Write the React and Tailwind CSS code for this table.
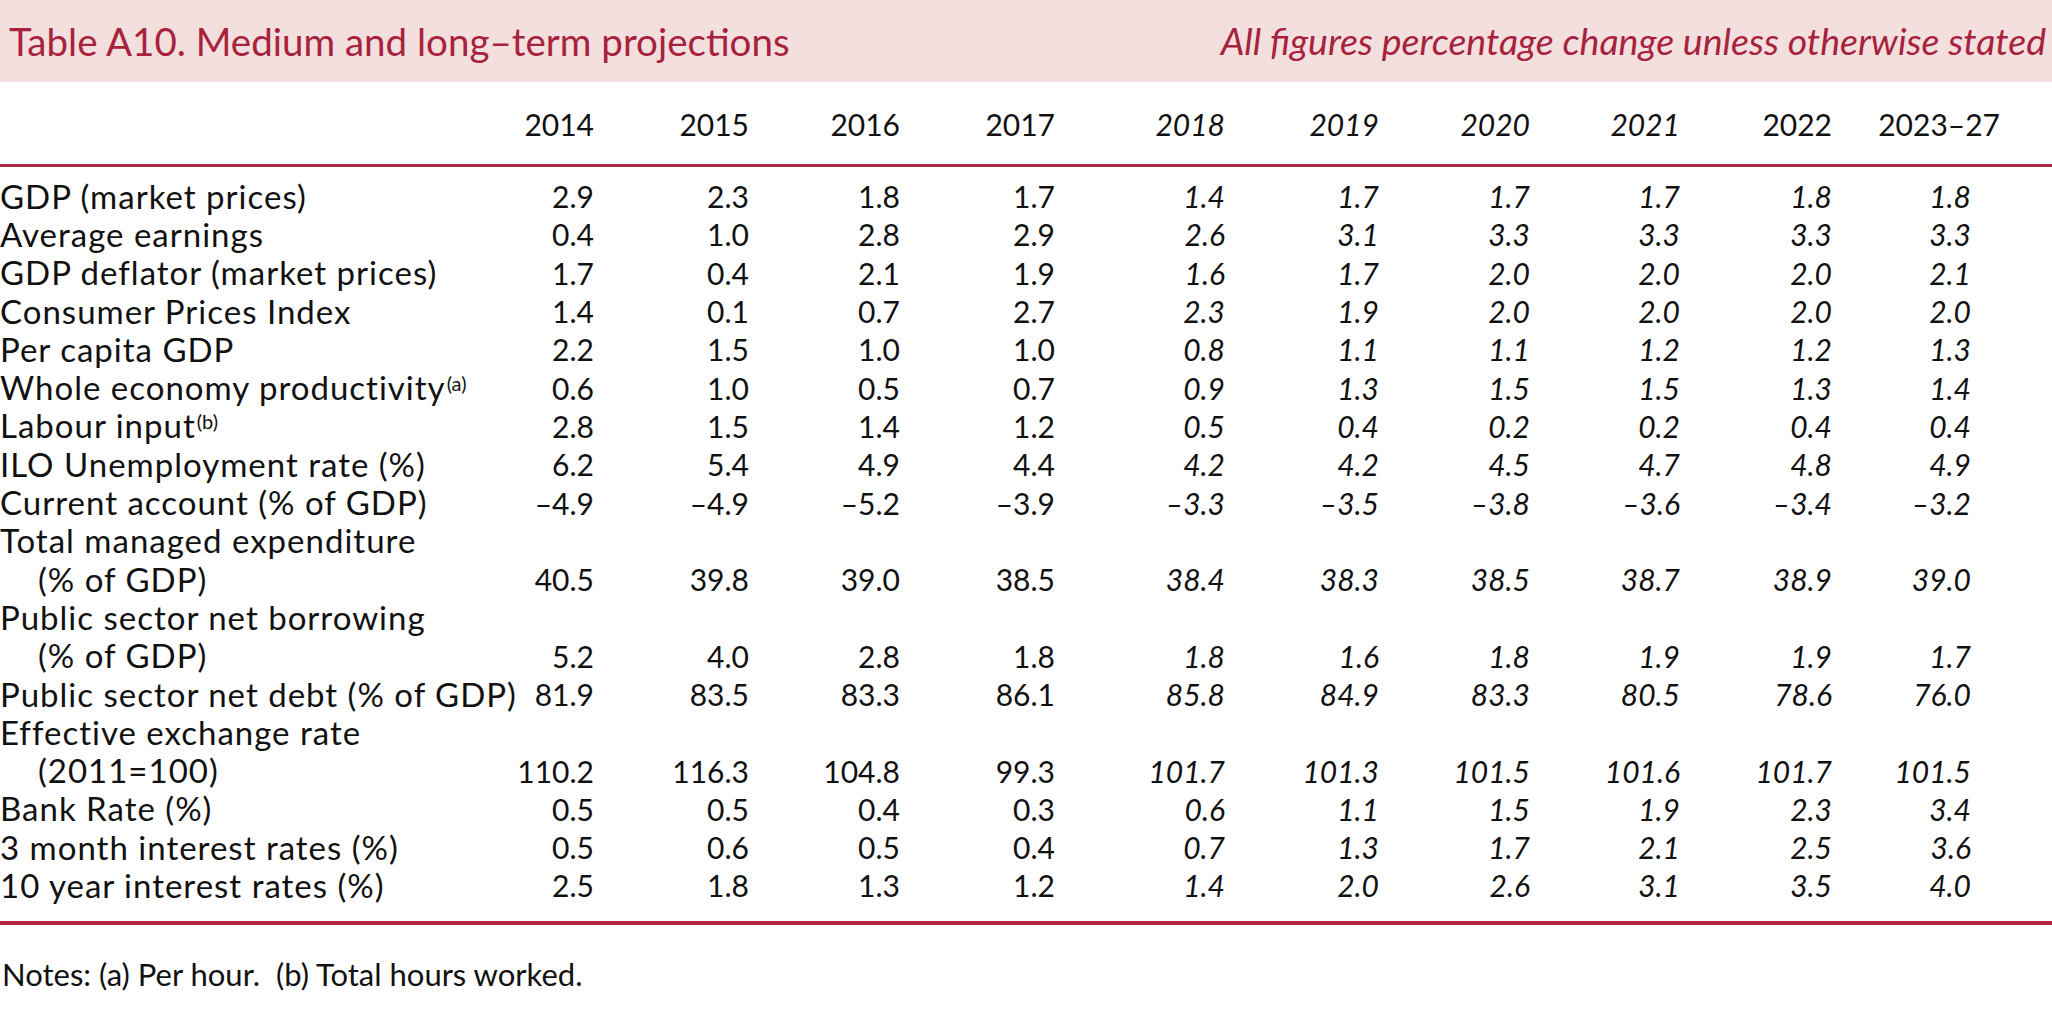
import React from "react";

const years = [
  { y: "2014", it: false },
  { y: "2015", it: false },
  { y: "2016", it: false },
  { y: "2017", it: false },
  { y: "2018", it: true },
  { y: "2019", it: true },
  { y: "2020", it: true },
  { y: "2021", it: true },
  { y: "2022", it: false },
  { y: "2023–27", it: false },
];

// label, sup, indent, values (null = label-only line)
const rows = [
  ["GDP (market prices)", null, false, ["2.9", "2.3", "1.8", "1.7", "1.4", "1.7", "1.7", "1.7", "1.8", "1.8"]],
  ["Average earnings", null, false, ["0.4", "1.0", "2.8", "2.9", "2.6", "3.1", "3.3", "3.3", "3.3", "3.3"]],
  ["GDP deflator (market prices)", null, false, ["1.7", "0.4", "2.1", "1.9", "1.6", "1.7", "2.0", "2.0", "2.0", "2.1"]],
  ["Consumer Prices Index", null, false, ["1.4", "0.1", "0.7", "2.7", "2.3", "1.9", "2.0", "2.0", "2.0", "2.0"]],
  ["Per capita GDP", null, false, ["2.2", "1.5", "1.0", "1.0", "0.8", "1.1", "1.1", "1.2", "1.2", "1.3"]],
  ["Whole economy productivity", "(a)", false, ["0.6", "1.0", "0.5", "0.7", "0.9", "1.3", "1.5", "1.5", "1.3", "1.4"]],
  ["Labour input", "(b)", false, ["2.8", "1.5", "1.4", "1.2", "0.5", "0.4", "0.2", "0.2", "0.4", "0.4"]],
  ["ILO Unemployment rate (%)", null, false, ["6.2", "5.4", "4.9", "4.4", "4.2", "4.2", "4.5", "4.7", "4.8", "4.9"]],
  ["Current account (% of GDP)", null, false, ["–4.9", "–4.9", "–5.2", "–3.9", "–3.3", "–3.5", "–3.8", "–3.6", "–3.4", "–3.2"]],
  ["Total managed expenditure", null, false, null],
  ["(% of GDP)", null, true, ["40.5", "39.8", "39.0", "38.5", "38.4", "38.3", "38.5", "38.7", "38.9", "39.0"]],
  ["Public sector net borrowing", null, false, null],
  ["(% of GDP)", null, true, ["5.2", "4.0", "2.8", "1.8", "1.8", "1.6", "1.8", "1.9", "1.9", "1.7"]],
  ["Public sector net debt (% of GDP)", null, false, ["81.9", "83.5", "83.3", "86.1", "85.8", "84.9", "83.3", "80.5", "78.6", "76.0"]],
  ["Effective exchange rate", null, false, null],
  ["(2011=100)", null, true, ["110.2", "116.3", "104.8", "99.3", "101.7", "101.3", "101.5", "101.6", "101.7", "101.5"]],
  ["Bank Rate (%)", null, false, ["0.5", "0.5", "0.4", "0.3", "0.6", "1.1", "1.5", "1.9", "2.3", "3.4"]],
  ["3 month interest rates (%)", null, false, ["0.5", "0.6", "0.5", "0.4", "0.7", "1.3", "1.7", "2.1", "2.5", "3.6"]],
  ["10 year interest rates (%)", null, false, ["2.5", "1.8", "1.3", "1.2", "1.4", "2.0", "2.6", "3.1", "3.5", "4.0"]],
];

// right edges: 594 749 900 1055 1225 1379 1530 1680 1832 2000
const gridCols =
  "grid grid-cols-[440px_154px_155px_151px_155px_170px_154px_151px_150px_152px_168px]";

export default function App() {
  return (
    <div
      className="w-[2052px] h-[1031px] bg-white text-[#111] overflow-hidden"
      style={{ fontFamily: "Lato, 'Open Sans', sans-serif" }}
    >
      {/* Title band */}
      <div className="h-[82px] bg-[#f3e0de] flex items-center justify-between pl-[9px] pr-[6px] text-[#a8223d]">
        <span className="text-[38.5px] leading-none">Table A10. Medium and long–term projections</span>
        <span className="text-[37.5px] leading-none italic">All figures percentage change unless otherwise stated</span>
      </div>

      {/* Year headers */}
      <div className={`${gridCols} h-[82px] items-center pt-[2px] text-[30px]`}>
        <div />
        {years.map((c) => (
          <div key={c.y} className={`text-right whitespace-nowrap ${c.it ? "italic" : ""}`}>
            {c.y}
          </div>
        ))}
      </div>

      <div className="h-[3px] bg-[#ad2840]" />

      {/* Body */}
      <div className="pt-[10px]">
        {rows.map(([label, sup, indent, vals], r) => (
          <div key={r} className={`${gridCols} h-[38.3px] items-center text-[30px] leading-none`}>
            <div className={`whitespace-nowrap text-[33px] tracking-[1px] ${indent ? "pl-[38px]" : ""}`}>
              {label}
              {sup && <span className="text-[20px] tracking-normal align-[9px] ml-[1px]">{sup}</span>}
            </div>
            {vals
              ? vals.map((v, i) => (
                  <div
                    key={i}
                    className={`text-right whitespace-nowrap ${i >= 4 ? "italic" : ""} ${i === 9 ? "pr-[29px]" : ""}`}
                  >
                    {v}
                  </div>
                ))
              : null}
          </div>
        ))}
      </div>

      <div className="mt-[16px] h-[4px] bg-[#ad2840]" />

      <div className="pt-[34px] text-[31px] leading-none pl-[2px]">
        Notes: (a) Per hour.&nbsp; (b) Total hours worked.
      </div>
    </div>
  );
}
